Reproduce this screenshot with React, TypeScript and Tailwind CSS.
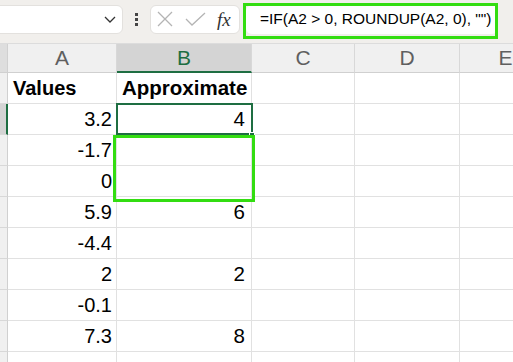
import { ReactNode } from 'react'

// 列寬設定 (px)
const COLS = [
  { key: 'A', w: 'w-[109px]' },
  { key: 'B', w: 'w-[135px]' },
  { key: 'C', w: 'w-[103px]' },
  { key: 'D', w: 'w-[105px]' },
  { key: 'E', w: 'w-[92px]' },
]

const ROWS: { a: string; b: string; bold?: boolean }[] = [
  { a: 'Values', b: 'Approximate', bold: true },
  { a: '3.2', b: '4' },
  { a: '-1.7', b: '' },
  { a: '0', b: '' },
  { a: '5.9', b: '6' },
  { a: '-4.4', b: '' },
  { a: '2', b: '2' },
  { a: '-0.1', b: '' },
  { a: '7.3', b: '8' },
  { a: '', b: '' },
]

function Cell({ w, children, className = '' }: { w: string; children?: ReactNode; className?: string }) {
  return (
    <div className={`${w} h-full shrink-0 border-r border-b border-[#e1e1e1] flex items-end pb-[5px] ${className}`}>
      {children}
    </div>
  )
}

export default function App() {
  return (
    <div className="relative w-[513px] h-[362px] overflow-hidden bg-white font-['Liberation_Sans',Arial,sans-serif] text-black">
      {/* Formula bar */}
      <div className="flex h-[43px] items-center bg-[#f1efec] pb-[5px]">
        <div className="-ml-[40px] w-[163px] h-[29px] shrink-0 bg-white rounded-[6px] border border-[#e3e1de] flex items-center pl-[18px] pr-[5px]">
          <span className="text-[15.5px]">B2</span>
          <svg width="12" height="7" viewBox="0 0 12 7" className="ml-auto mr-[1px]">
            <path d="M1 1L6 6L11 1" stroke="#333" strokeWidth="1.3" fill="none" />
          </svg>
        </div>
        <div className="ml-[12px] flex flex-col gap-[2px]">
          <span className="block w-[3px] h-[3px] bg-[#444]" />
          <span className="block w-[3px] h-[3px] bg-[#444]" />
          <span className="block w-[3px] h-[3px] bg-[#444]" />
        </div>
        <div className="ml-[12px] w-[90px] h-[29px] shrink-0 bg-white rounded-[6px] border border-[#e3e1de] flex items-center pl-[6px]">
          <svg width="16" height="16" viewBox="0 0 16 16">
            <path d="M1 1L15 15M15 1L1 15" stroke="#b4b4b4" strokeWidth="1.3" fill="none" />
          </svg>
          <svg width="21" height="14" viewBox="0 0 21 14" className="ml-[12px]">
            <path d="M1 7L7 13L20 1" stroke="#b4b4b4" strokeWidth="1.3" fill="none" />
          </svg>
          <span className="ml-[11px] font-['Liberation_Serif',serif] italic text-[19px] leading-none text-[#333]">fx</span>
        </div>
        <div className="ml-[6px] w-[252px] h-[29px] shrink-0 bg-white rounded-[6px] flex items-center pl-[14px] text-[15.5px]">
          =IF(A2 &gt; 0, ROUNDUP(A2, 0), "")
        </div>
      </div>

      {/* Column headers */}
      <div className="flex h-[30px] bg-[#f0f0f0] border-t border-[#dcdcdc]">
        <div className="w-[8px] h-full shrink-0 bg-[#dedede] border-r border-b border-[#d0d0d0]" />
        {COLS.map(c => (
          <div
            key={c.key}
            className={`${c.w} h-full shrink-0 flex items-center justify-center text-[21px] border-r border-[#d8d8d8] ${
              c.key === 'B'
                ? 'bg-[#d4d4d4] text-[#1e6e42] border-b-2 border-b-[#1e6e42]'
                : 'text-[#5f5f5f] border-b border-b-[#d0d0d0]'
            }`}
          >
            {c.key}
          </div>
        ))}
      </div>

      {/* Rows */}
      {ROWS.map((r, i) => (
        <div key={i} className="flex h-[31px]">
          <div
            className={`w-[8px] h-full shrink-0 border-b border-[#d8d8d8] ${
              i === 1 ? 'bg-[#d4d4d4] border-r-2 border-r-[#1e6e42]' : 'bg-[#f0f0f0] border-r border-r-[#d0d0d0]'
            }`}
          />
          <Cell w="w-[109px]" className={r.bold ? 'pl-[5px]' : 'justify-end pr-[4px]'}>
            <span className={`text-[20px] leading-none ${r.bold ? 'font-bold' : ''}`}>{r.a}</span>
          </Cell>
          <Cell w="w-[135px]" className={r.bold ? 'pl-[5px]' : 'justify-end pr-[6px]'}>
            <span className={`text-[20.5px] leading-none ${r.bold ? 'font-bold' : ''}`}>{r.b}</span>
          </Cell>
          <Cell w="w-[103px]" />
          <Cell w="w-[105px]" />
          <Cell w="w-[92px]" />
        </div>
      ))}

      {/* Active cell B2 */}
      <div className="absolute left-[116px] top-[103px] w-[137px] h-[32px] border-2 border-[#1e6e42] pointer-events-none" />
      <div className="absolute left-[249px] top-[132px] w-[6px] h-[6px] bg-[#1e6e42] border border-white pointer-events-none" />

      {/* Annotation highlights */}
      <div className="absolute left-[243px] top-[3px] w-[255px] h-[36px] border-[3px] border-[#33dd11] pointer-events-none" />
      <div className="absolute left-[113px] top-[135px] w-[142px] h-[67px] border-[3px] border-[#33dd11] pointer-events-none" />
    </div>
  )
}
